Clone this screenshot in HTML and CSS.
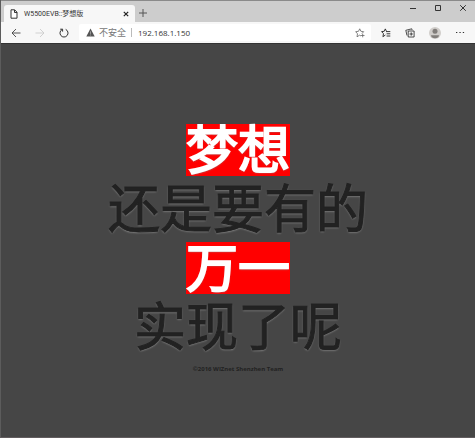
FILE: index.html
```html
<!DOCTYPE html>
<html lang="zh-CN">
<head>
<meta charset="utf-8">
<title>W5500EVB::梦想版</title>
<link rel="stylesheet" href="styles.css">
</head>
<body>
<div class="window">
  <header class="titlebar">
    <div class="tab">
      <svg class="tab-icon" width="8" height="10" viewBox="0 0 8 10"><path d="M1 .8h3.7L7 3.2v6H1z M4.5 1v2.5H7" fill="#fff" stroke="#333" stroke-width="1"/></svg>
      <span class="tab-title">W5500EVB::梦想版</span>
      <button class="tab-close" type="button" aria-label="关闭标签页"><svg width="6" height="6" viewBox="0 0 6 6"><path d="M.8 .8l4.4 4.4M5.2 .8L.8 5.2" stroke="#222" stroke-width="1.2"/></svg></button>
    </div>
    <button class="new-tab" type="button" aria-label="新建标签页"><svg width="8" height="8" viewBox="0 0 8 8"><path d="M4 0v8M0 4h8" stroke="#555" stroke-width="1"/></svg></button>
    <div class="controls">
      <button type="button" aria-label="最小化"><svg width="8" height="8" viewBox="0 0 8 8"><path d="M1 4.5h6" stroke="#333"/></svg></button>
      <button type="button" aria-label="最大化"><svg width="8" height="8" viewBox="0 0 8 8"><path d="M1.5 1.5h5v5h-5z" fill="none" stroke="#333"/></svg></button>
      <button type="button" aria-label="关闭"><svg width="8" height="8" viewBox="0 0 8 8"><path d="M1.2 1.2l5.6 5.6M6.8 1.2L1.2 6.8" stroke="#333"/></svg></button>
    </div>
  </header>
  <nav class="toolbar">
    <div class="nav-buttons">
      <button type="button" aria-label="后退"><svg width="10" height="10" viewBox="0 0 10 10"><path d="M9.500 5H1M5 1L1 5l4 4" fill="none" stroke="#444" stroke-width=".9"/></svg></button>
      <button type="button" aria-label="前进"><svg width="10" height="10" viewBox="0 0 10 10"><path d="M.5 5H9M5 1l4 4-4 4" fill="none" stroke="#ccc" stroke-width=".9"/></svg></button>
      <button type="button" aria-label="刷新"><svg width="10" height="10" viewBox="0 0 10 10"><path d="M3.300 1.400A4 4 0 1 0 6.700 1.400M1.200 1.200h2.400v2.400" fill="none" stroke="#333" stroke-width="1"/></svg></button>
    </div>
    <div class="address">
      <svg width="9" height="9" viewBox="0 0 9 9"><path d="M4.500 .6L8.700 8.400H.3z" fill="#555"/><path d="M4.500 3.300v2.600M4.500 6.500v1" stroke="#ccc" stroke-width=".6"/></svg>
      <span class="insecure">不安全</span>
      <span class="divider"></span>
      <input class="url" type="text" value="192.168.1.150" aria-label="地址">
      <button type="button" aria-label="收藏此页"><svg width="10" height="10" viewBox="0 0 10 10"><path d="M6 8L4.600 7.200 2 8.800l.5-3L.7 3.700l2.800-.4L4.700.8l1.200 2.500 2.800.4-1.800 1.800M7.700 5.700v3.600M5.900 7.500h3.600" fill="none" stroke="#666" stroke-width=".8"/></svg></button>
    </div>
    <div class="tools">
      <button type="button" aria-label="收藏夹"><svg width="10" height="10" viewBox="0 0 10 10"><path d="M4.400 7L1.900 8.700l.6-3L.6 3.600l2.600-.3L4.300.9l1.100 2.300M5 3.600h4.300M5.600 5.800h3.700M5.600 8h3.700" fill="none" stroke="#222" stroke-width=".9"/></svg></button>
      <button type="button" aria-label="集锦"><svg width="10" height="10" viewBox="0 0 10 10"><path d="M3.200 3h5.900v6H3.200zM6.200 4.300v3.400M4.500 6h3.400M2 7.500L.8 2.300 6.800.8l.3 1.300" fill="none" stroke="#222" stroke-width=".8"/></svg></button>
      <button type="button" aria-label="个人资料"><svg width="12" height="12" viewBox="0 0 12 12"><circle cx="6" cy="6" r="6" fill="#d0cdca"/><circle cx="6" cy="4.300" r="2.500" fill="#817d7a"/><path d="M2 8.200h8c0 2-1.800 3-4 3s-4-1-4-3z" fill="#817d7a"/></svg></button>
      <button type="button" aria-label="设置及其他"><svg width="10" height="10" viewBox="0 0 10 10"><path d="M1 4.500h1.300M4.400 4.500h1.300M7.800 4.500h1.300" stroke="#333" stroke-width="1.200"/></svg></button>
    </div>
  </nav>
  <main class="page">
    <h1 class="slogan">
      <span class="line mark">梦想</span>
      <span class="line">还是要有的</span>
      <span class="line mark">万一</span>
      <span class="line">实现了呢</span>
    </h1>
    <p class="copyright">©2016 WIZnet Shenzhen Team</p>
  </main>
</div>
</body>
</html>
```
FILE: styles.css
```css
* { box-sizing: border-box; }
body {
  margin: 0;
  font-family: "Open Sans", "Noto Sans CJK SC", sans-serif;
}
button {
  display: flex;
  align-items: center;
  justify-content: center;
  padding: 0;
  border: 0;
  background: none;
}
svg { display: block; flex: none; }
.window {
  display: flex;
  flex-direction: column;
  min-height: 100vh;
  border-left: 1px solid #5c5c5c;
  border-bottom: 1px solid #625d5f;
  background: #464646;
}
.titlebar {
  display: flex;
  height: 22px;
  padding-left: 3px;
  border-top: 1px solid #8a8a8a;
  background: #cdcdcd;
}
.tab {
  display: flex;
  align-items: center;
  width: 131px;
  margin-top: 4px;
  padding: 0 6px;
  border-radius: 3px 3px 0 0;
  background: #f7f7f7;
}
.tab-title {
  flex: 1;
  margin-left: 6px;
  font-family: Roboto, "Noto Sans CJK SC", sans-serif;
  font-size: 7px;
  line-height: 12px;
  color: #333;
  white-space: nowrap;
}
.new-tab { width: 16px; margin-top: 3px; }
.controls {
  display: flex;
  gap: 17px;
  height: 14px;
  margin-left: auto;
  padding-right: 8px;
}
.toolbar {
  display: flex;
  align-items: center;
  height: 21px;
  padding: 0 10px;
  background: #f7f7f7;
}
.nav-buttons { display: flex; gap: 14px; width: 68px; }
.address {
  display: flex;
  flex: 1;
  align-items: center;
  height: 17px;
  padding: 0 6px 0 7px;
  border-radius: 2px;
  background: #fff;
  font-size: 9px;
}
.insecure { margin-left: 4px; line-height: 12px; color: #777; }
.divider { width: 1px; height: 9px; margin: 0 6px 0 5px; background: #bbb; }
.url {
  flex: 1;
  min-width: 0;
  padding: 0;
  border: 0;
  outline: 0;
  background: none;
  font-family: inherit;
  font-size: 8px;
  line-height: 12px;
  color: #333;
}
.tools { display: flex; align-items: center; gap: 14px; margin-left: 10px; }
.page {
  flex: 1;
  padding-top: 80px;
  border-top: 1px solid #333;
  text-align: center;
  color: #222;
}
.slogan {
  display: flex;
  flex-direction: column;
  align-items: center;
  gap: 7px;
  margin: 0;
  font-family: "Liberation Sans", "Noto Sans CJK SC", sans-serif;
  font-size: 52px;
  font-weight: 400;
  line-height: 50px;
  -webkit-text-stroke: 1px currentColor;
  text-shadow: 0 1px 2px #888;
}
.line { padding-top: 2px; }
.mark {
  background: #f00;
  color: #fff;
  -webkit-text-stroke-width: 2px;
}
.copyright {
  margin: 10px 0 0;
  font-size: 6px;
  font-weight: 700;
  line-height: 12px;
}
```
